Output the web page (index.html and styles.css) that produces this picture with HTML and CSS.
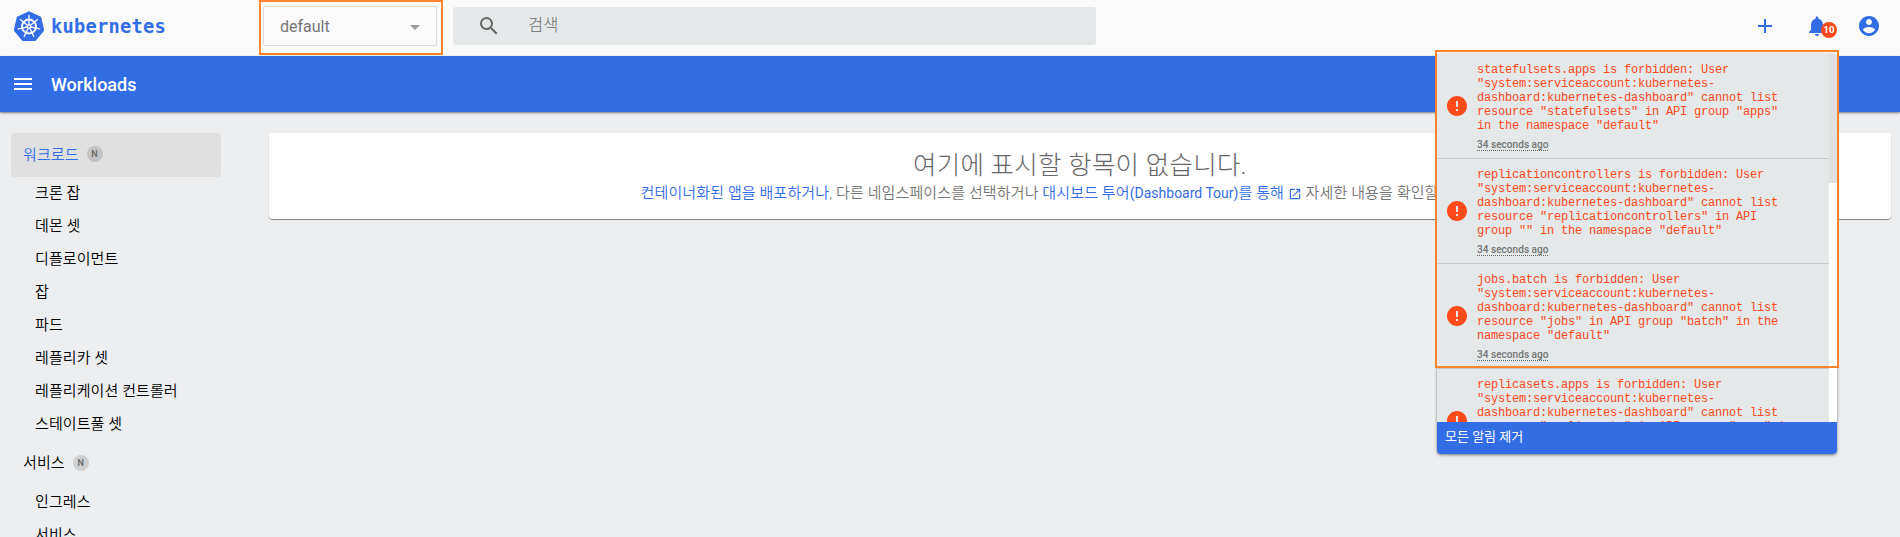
FILE: index.html
```html
<!DOCTYPE html>
<html lang="ko">
<head>
<meta charset="utf-8">
<title>Kubernetes Dashboard</title>
<link rel="stylesheet" href="styles.css">
</head>
<body>
<header class="topbar">
  <div class="brand">
    <svg class="brand-logo" viewBox="0 0 32 32">
      <path d="M16 1.2 27.4 6.6Q28.2 7 28.4 7.9L31 19.600Q31.200 20.500 30.600 21.300L23 30.400Q22.400 31 21.500 31H10.500Q9.600 31 9 30.400L1.400 21.300Q.8 20.500 1 19.600L3.600 7.900Q3.800 7 4.600 6.600Z" fill="#326de6"/>
      <g fill="none" stroke="#fff">
        <circle cx="16" cy="16.500" r="7" stroke-width="1.800"/>
        <path stroke-width="1.300" stroke-linecap="round" d="M16 16.500V5.500M16 16.500l8.600-6.900M16 16.500l10.700 2.400M16 16.500l4.800 9.900M16 16.500l-4.800 9.900M16 16.500 5.300 18.900M16 16.500 7.400 9.600"/>
      </g>
      <circle cx="16" cy="16.500" r="2.200" fill="#fff"/><circle cx="16" cy="16.500" r=".9" fill="#326de6"/>
    </svg>
    <span class="brand-name">kubernetes</span>
  </div>
  <div class="namespace"><div class="select"><span>default</span><i class="caret"></i></div></div>
  <div class="search">
    <svg class="search-icon" viewBox="0 0 24 24"><path d="M15.500 14h-.79l-.28-.27A6.471 6.471 0 0 0 16 9.500 6.500 6.500 0 1 0 9.500 16c1.610 0 3.090-.59 4.230-1.570l.27.28v.79l5 4.990L20.490 19l-4.990-5zm-6 0C7.010 14 5 11.990 5 9.500S7.010 5 9.500 5 14 7.010 14 9.500 11.990 14 9.500 14z"/></svg>
    <span>검색</span>
  </div>
  <div class="actions">
    <svg class="icon" viewBox="0 0 24 24"><path d="M19 13h-6v6h-2v-6H5v-2h6V5h2v6h6v2z"/></svg>
    <div class="bell">
      <svg class="icon" viewBox="0 0 24 24"><path d="M12 22c1.100 0 2-.9 2-2h-4c0 1.100.89 2 2 2zm6-6v-5c0-3.070-1.640-5.640-4.500-6.320V4c0-.83-.67-1.500-1.500-1.500s-1.500.67-1.500 1.500v.68C7.630 5.360 6 7.920 6 11v5l-2 2v1h16v-1l-2-2z"/></svg>
      <span class="count">10</span>
    </div>
    <svg class="icon" viewBox="0 0 24 24"><path d="M12 2C6.480 2 2 6.480 2 12s4.480 10 10 10 10-4.480 10-10S17.520 2 12 2zm0 3c1.660 0 3 1.340 3 3s-1.340 3-3 3-3-1.340-3-3 1.340-3 3-3zm0 14.200c-2.500 0-4.710-1.280-6-3.220.03-1.990 4-3.080 6-3.080 1.990 0 5.970 1.090 6 3.080-1.290 1.940-3.500 3.220-6 3.220z"/></svg>
  </div>
</header>
<div class="titlebar">
  <div class="burger"></div>
  <h1>Workloads</h1>
</div>
<div class="layout">
  <nav class="nav">
    <div class="group active">워크로드<span class="tag">N</span></div>
    <div class="item">크론 잡</div>
    <div class="item">데몬 셋</div>
    <div class="item">디플로이먼트</div>
    <div class="item">잡</div>
    <div class="item">파드</div>
    <div class="item">레플리카 셋</div>
    <div class="item">레플리케이션 컨트롤러</div>
    <div class="item">스테이트풀 셋</div>
    <div class="group second">서비스<span class="tag">N</span></div>
    <div class="item">인그레스</div>
    <div class="item">서비스</div>
  </nav>
  <main class="card">
    <h2>여기에 표시할 항목이 없습니다.</h2>
    <p><a>컨테이너화된 앱을 배포하거나</a>, 다른 네임스페이스를 선택하거나 <a>대시보드 투어<span class="latin">(Dashboard Tour)</span>를 통해 <svg class="ext" viewBox="0 0 24 24"><path d="M19 19H5V5h7V3H5a2 2 0 0 0-2 2v14a2 2 0 0 0 2 2h14c1.100 0 2-.9 2-2v-7h-2v7zM14 3v2h3.590l-9.830 9.830 1.410 1.410L19 6.410V10h2V3h-7z"/></svg></a> 자세한 내용을 확인할 수 있습니다.</p>
  </main>
</div>
<section class="panel">
  <div class="scroller">
    <div class="list">
      <article class="note">
        <svg class="err" viewBox="0 0 24 24"><path d="M12 2C6.480 2 2 6.480 2 12s4.480 10 10 10 10-4.480 10-10S17.520 2 12 2zm1 15h-2v-2h2v2zm0-4h-2V7h2v6z"/></svg>
        <div><pre>statefulsets.apps is forbidden: User
"system:serviceaccount:kubernetes-
dashboard:kubernetes-dashboard" cannot list
resource "statefulsets" in API group "apps"
in the namespace "default"</pre><span class="time">34 seconds ago</span></div>
      </article>
      <article class="note">
        <svg class="err" viewBox="0 0 24 24"><path d="M12 2C6.480 2 2 6.480 2 12s4.480 10 10 10 10-4.480 10-10S17.520 2 12 2zm1 15h-2v-2h2v2zm0-4h-2V7h2v6z"/></svg>
        <div><pre>replicationcontrollers is forbidden: User
"system:serviceaccount:kubernetes-
dashboard:kubernetes-dashboard" cannot list
resource "replicationcontrollers" in API
group "" in the namespace "default"</pre><span class="time">34 seconds ago</span></div>
      </article>
      <article class="note">
        <svg class="err" viewBox="0 0 24 24"><path d="M12 2C6.480 2 2 6.480 2 12s4.480 10 10 10 10-4.480 10-10S17.520 2 12 2zm1 15h-2v-2h2v2zm0-4h-2V7h2v6z"/></svg>
        <div><pre>jobs.batch is forbidden: User
"system:serviceaccount:kubernetes-
dashboard:kubernetes-dashboard" cannot list
resource "jobs" in API group "batch" in the
namespace "default"</pre><span class="time">34 seconds ago</span></div>
      </article>
      <article class="note">
        <svg class="err" viewBox="0 0 24 24"><path d="M12 2C6.480 2 2 6.480 2 12s4.480 10 10 10 10-4.480 10-10S17.520 2 12 2zm1 15h-2v-2h2v2zm0-4h-2V7h2v6z"/></svg>
        <div><pre>replicasets.apps is forbidden: User
"system:serviceaccount:kubernetes-
dashboard:kubernetes-dashboard" cannot list
resource "replicasets" in API group "apps" in
the namespace "default"</pre><span class="time">34 seconds ago</span></div>
      </article>
    </div>
    <div class="track"><div class="thumb"></div></div>
  </div>
  <div class="clear">모든 알림 제거</div>
</section>
<div class="mark mark-ns"></div>
<div class="mark mark-panel"></div>
</body>
</html>
```
FILE: styles.css
```css
* { box-sizing: border-box; }
body {
  margin: 0;
  height: 537px;
  overflow: hidden;
  position: relative;
  background: #edeef0;
  font-family: Roboto, "Noto Sans CJK KR", sans-serif;
  font-size: 14px;
}
.topbar {
  display: flex;
  height: 56px;
  background: #fafafa;
}
.brand { display: flex; width: 263px; padding: 10px 0 0 13px; }
.brand-logo { width: 32px; height: 32px; }
.brand-name {
  margin-left: 6px;
  font: bold 18.7px/34px "DejaVu Sans Mono", monospace;
  letter-spacing: .25px;
  color: #326de6;
}
.namespace { width: 190px; padding-top: 6px; }
.select {
  display: flex;
  align-items: center;
  justify-content: space-between;
  width: 174px;
  height: 40px;
  padding: 0 16px;
  border: 1px solid #dadbdb;
  border-radius: 2px;
  font-size: 16px;
  color: #757575;
}
.caret { border: 5px solid transparent; border-top-color: #999; border-bottom: 0; margin-top: 2px; }
.search {
  display: flex;
  align-items: center;
  width: 643px;
  height: 38px;
  margin-top: 7px;
  padding-left: 24px;
  border-radius: 3px;
  background: #e4e8e8;
  color: #6c6c6c;
  font-size: 16.5px;
  font-weight: 300;
  line-height: 34px;
}
.search-icon { width: 24px; height: 24px; margin-right: 27px; fill: #666; }
.search span { margin-top: 0; }
.actions { display: flex; margin-left: auto; padding: 14px 19px 0 0; gap: 28px; }
.icon { display: block; width: 24px; height: 24px; fill: #326de6; }
.bell { position: relative; }
.count {
  position: absolute;
  left: 16px;
  top: 8px;
  width: 16px;
  height: 16px;
  border-radius: 50%;
  background: #ff4a1c;
  color: #fff;
  font: bold 9.5px/16px Roboto, sans-serif;
  text-align: center;
}
.titlebar {
  display: flex;
  align-items: center;
  height: 56px;
  padding-left: 14px;
  background: #326de6;
  color: #fff;
  box-shadow: 0 1px 2px rgba(0,0,0,.5);
}
.burger { width: 18px; height: 12px; border: solid #fff; border-width: 2px 0; background: linear-gradient(#fff, #fff) 0 3px / 100% 2px no-repeat; }
.titlebar h1 { margin: 0 0 0 19px; font-size: 18px; font-weight: 500; }
.layout { display: flex; padding: 20px 9px 0 11px; }
.nav { width: 258px; flex: none; padding-top: 1px; font-size: 15px; letter-spacing: .1px; }
.group { display: flex; align-items: center; width: 210px; height: 44px; padding: 0 0 4px 12px; border-radius: 3px; font-weight: 350; }
.active { background: #e0e0e0; color: #326de6; }
.second { height: 45px; }
.tag {
  width: 16px;
  height: 16px;
  margin: 2px 0 0 8px;
  border-radius: 50%;
  background: rgba(0,0,0,.13);
  color: #666;
  font: 500 9px/17px Roboto, sans-serif;
  text-align: center;
}
.item { height: 33px; padding-left: 24px; font-weight: 350; line-height: 33px; }
.card {
  flex: 1;
  height: 87px;
  border-radius: 4px;
  background: linear-gradient(#edeef0 1px, #fff 1px);
  box-shadow: 0 1px 1px rgba(0,0,0,.45);
  color: #757575;
  font-weight: 350;
  text-align: center;
}
.card h2 { margin: 17px 0 0; font-size: 25.500px; font-weight: 300; letter-spacing: .25px; line-height: 32px; color: #666; }
.card p { margin: 0; font-size: 15px; letter-spacing: .13px; line-height: 25px; white-space: nowrap; }
.card a { color: #326de6; }
.latin { font-size: 14px; font-weight: 400; letter-spacing: 0; }
.ext { width: 14px; height: 14px; fill: #326de6; vertical-align: -3px; }
.panel {
  position: absolute;
  left: 1437px;
  top: 54px;
  width: 400px;
  height: 400px;
  border-radius: 4px;
  overflow: hidden;
  background: #fff;
  box-shadow: 0 1px 3px rgba(0,0,0,.5);
}
.scroller { display: flex; height: 368px; overflow: hidden; }
.list { width: 392px; }
.note {
  display: flex;
  align-items: center;
  height: 105px;
  padding-left: 8px;
  border-bottom: 1px solid #c7cbcb;
  background: #e4e8e8;
}
.err { width: 24px; height: 24px; margin-right: 8px; fill: #ff4a1c; }
.note pre {
  margin: 1px 0 5px;
  color: #ff4a1c;
  font: 12px/14px "Liberation Mono", monospace;
  letter-spacing: -.2px;
}
.time {
  display: block;
  width: 71px;
  height: 13px;
  border-bottom: 1px dotted #666;
  color: #757575;
  font-size: 10.100px;
  font-weight: 500;
  line-height: 14px;
  white-space: nowrap;
}
.track { width: 8px; }
.thumb { height: 129px; background: #e0e0e0; }
.clear { height: 32px; padding-left: 8px; background: #326de6; color: #fff; font-size: 13px; line-height: 30px; }
.mark { position: absolute; border: 2px solid #ff832b; }
.mark-ns { left: 259px; top: 0; width: 184px; height: 55px; }
.mark-panel { left: 1435px; top: 50px; width: 404px; height: 318px; }
```
